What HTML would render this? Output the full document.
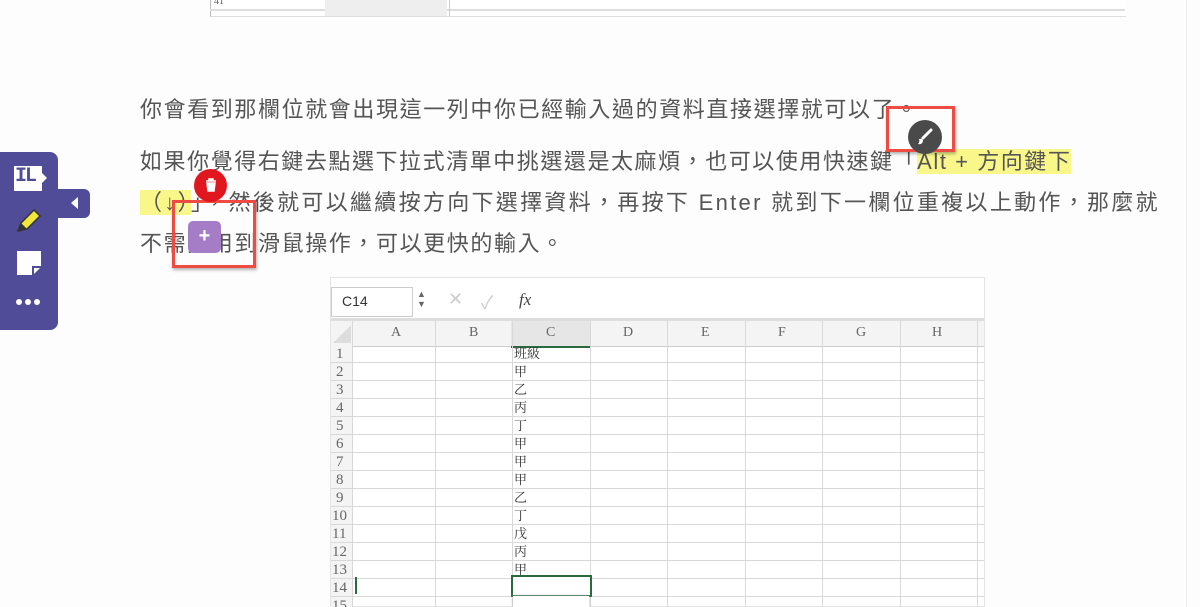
<!DOCTYPE html>
<html><head><meta charset="utf-8"><style>
html,body{margin:0;width:1200px;height:607px;overflow:hidden}
body{background:#fdfdfd;position:relative;font-family:"Liberation Sans","Noto Sans CJK TC",sans-serif}
.ab{position:absolute}
.t{position:absolute;left:140px;font-size:22px;color:#555;white-space:nowrap;letter-spacing:1.6px;line-height:30px}
.hl{background:#f9f78a}
.g{position:absolute;background:#d8d8d8}
.c{position:absolute;font-family:"Liberation Serif","Noto Serif CJK SC",serif;color:#666;font-size:14px}
</style></head><body>
<div class="ab" style="left:1186px;top:0;width:1px;height:607px;background:#eee"></div>
<div class="ab" style="left:210px;top:0;width:915px;height:16px;background:#fff;border-bottom:1px solid #ddd;border-left:1px solid #bbb"></div>
<div class="ab" style="left:210px;top:9px;width:915px;height:2px;background:#ddd"></div>
<div class="ab" style="left:325px;top:0;width:122px;height:16px;background:#eee"></div>
<div class="ab" style="left:449px;top:0;width:1px;height:16px;background:#ccc"></div>
<div class="c" style="left:214px;top:-4px;font-size:10px">41</div>

<div class="t" style="top:95px">你會看到那欄位就會出現這一列中你已經輸入過的資料直接選擇就可以了。</div>
<div class="t" style="top:147px;letter-spacing:1.55px">如果你覺得右鍵去點選下拉式清單中挑選還是太麻煩，也可以使用快速鍵「<span class="hl">Alt + 方向鍵下</span></div>
<div class="t" style="top:188px;letter-spacing:2.3px"><span class="hl">（↓）</span>」，然後就可以繼續按方向下選擇資料，再按下 Enter 就到下一欄位重複以上動作，那麼就</div>
<div class="t" style="top:229px">不需要用到滑鼠操作，可以更快的輸入。</div>

<div class="ab" style="left:330px;top:277px;width:655px;height:330px;background:#fff;border:1px solid #e4e4e4;box-sizing:border-box"></div>
<div class="ab" style="left:331px;top:287px;width:80px;height:28px;border:1px solid #ccc;background:#fff"></div>
<div class="ab" style="left:342px;top:293px;font-size:14px;color:#333">C14</div>
<div class="ab" style="left:417px;top:289px;font-size:9px;color:#666;line-height:10px">▲<br>▼</div>
<div class="ab" style="left:448px;top:289px;font-size:18px;color:#ccc">✕</div>
<div class="ab" style="left:481px;top:289px;font-size:18px;color:#ccc">✓</div>
<div class="ab" style="left:519px;top:290px;font-size:17px;color:#444;font-family:'Liberation Serif',serif;font-style:italic">fx</div>
<div class="ab" style="left:331px;top:318px;width:653px;height:3px;background:#ddd"></div>
<div class="ab" style="left:331px;top:321px;width:653px;height:25px;background:#f4f4f4;border-bottom:1px solid #ccc"></div>
<div class="ab" style="left:511px;top:321px;width:79px;height:25px;background:#e6e6e6;border-bottom:2px solid #2a6b3d"></div>
<div class="ab" style="left:333px;top:325px;width:0;height:0;border-left:18px solid transparent;border-bottom:18px solid #ddd"></div>
<div class="ab" style="left:331px;top:346px;width:22px;height:261px;background:#f4f4f4"></div>
<div class="c" style="left:391px;top:325px">A</div><div class="c" style="left:469px;top:325px">B</div><div class="c" style="left:546px;top:325px">C</div><div class="c" style="left:623px;top:325px">D</div><div class="c" style="left:701px;top:325px">E</div><div class="c" style="left:778px;top:325px">F</div><div class="c" style="left:856px;top:325px">G</div><div class="c" style="left:932px;top:325px">H</div>
<div class="g" style="left:352px;top:321px;width:1px;height:286px"></div>
<div class="g" style="left:435px;top:321px;width:1px;height:286px"></div>
<div class="g" style="left:512px;top:321px;width:1px;height:286px"></div>
<div class="g" style="left:590px;top:321px;width:1px;height:286px"></div>
<div class="g" style="left:667px;top:321px;width:1px;height:286px"></div>
<div class="g" style="left:745px;top:321px;width:1px;height:286px"></div>
<div class="g" style="left:822px;top:321px;width:1px;height:286px"></div>
<div class="g" style="left:900px;top:321px;width:1px;height:286px"></div>
<div class="g" style="left:977px;top:321px;width:1px;height:286px"></div>
<div id="rows"></div>
<script>
var v=["班級","甲","乙","丙","丁","甲","甲","甲","乙","丁","戊","丙","甲","",""],h="";
for(var i=0;i<15;i++){var y=345+i*18;h+='<div class="g" style="left:331px;top:'+(y+17)+'px;width:653px;height:1px"></div>';
h+='<div class="c" style="left:'+(i<9?336:332)+'px;top:'+y+'px;font-size:15px;line-height:18px">'+(i+1)+'</div>';
h+='<div class="c" style="left:514px;top:'+y+'px;font-size:13px;line-height:18px;color:#333">'+v[i]+'</div>';}
document.getElementById('rows').innerHTML=h;
</script>
<div class="ab" style="left:511px;top:575px;width:77px;height:18px;border:2px solid #2a6b3d;background:#fff"></div>
<div class="ab" style="left:355px;top:577px;width:2px;height:17px;background:#2a6b3d"></div>
<div class="ab" style="left:513px;top:596px;width:76px;height:11px;background:#fff;box-shadow:0 0 3px #bbb"></div>

<div class="ab" style="left:0;top:152px;width:58px;height:178px;background:#514c97;border-radius:0 8px 8px 0"></div>
<div class="ab" style="left:56px;top:189px;width:34px;height:29px;background:#514c97;border-radius:0 6px 6px 0"></div>
<div class="ab" style="left:71px;top:197px;width:0;height:0;border-top:6px solid transparent;border-bottom:6px solid transparent;border-right:7px solid #fff"></div>
<div class="ab" style="left:14px;top:166px;width:28px;height:25px;background:#fff"></div>
<div class="ab" style="left:15px;top:165px;font:bold 20px 'Liberation Mono',monospace;color:#514c97;letter-spacing:-2px">IL</div>
<div class="ab" style="left:42px;top:173px;width:0;height:0;border-top:5px solid transparent;border-bottom:5px solid transparent;border-left:5px solid #fff"></div>
<svg class="ab" style="left:14px;top:207px" width="30" height="28"><path d="M4 24 L7 16 L20 3 L26 9 L13 22 Z" fill="#f1e63a" stroke="#333" stroke-width="1.5"/><path d="M4 24 L7 16 L13 22Z" fill="#333"/></svg>
<svg class="ab" style="left:16px;top:250px" width="26" height="26"><path d="M1 1 H25 V17 L17 25 H1 Z" fill="#fff"/><path d="M17 25 V17 H25" fill="none" stroke="#514c97" stroke-width="2"/></svg>
<div class="ab" style="left:16px;top:299px;width:6px;height:6px;border-radius:3px;background:#fff;box-shadow:9px 0 #fff,18px 0 #fff"></div>

<div class="ab" style="left:886px;top:106px;width:63px;height:40px;border:3px solid #ee4b43;box-shadow:1px 2px 3px rgba(0,0,0,.3)"></div>
<div class="ab" style="left:908px;top:120px;width:34px;height:34px;border-radius:50%;background:#4a4a4a"></div>
<svg class="ab" style="left:914px;top:126px" width="22" height="22"><path d="M17 4 L9 12" stroke="#fff" stroke-width="3" stroke-linecap="round"/><path d="M5 13 Q9 12 9 15 Q8 19 4 18 Q6 16 5 13Z" fill="#fff"/></svg>
<div class="ab" style="left:172px;top:200px;width:78px;height:62px;border:3px solid #ee4b43;box-shadow:1px 2px 3px rgba(0,0,0,.3)"></div>
<div class="ab" style="left:194px;top:169px;width:33px;height:33px;border-radius:50%;background:#e0171f"></div>
<svg class="ab" style="left:203px;top:177px" width="16" height="16"><path d="M3 4 H13 M6 4 V2 H10 V4 M4 6 H12 L11 14 H5 Z" stroke="#fff" stroke-width="1.5" fill="#fff"/></svg>
<div class="ab" style="left:188px;top:221px;width:33px;height:32px;border-radius:5px;background:#a57dc7;color:#fff;font:bold 20px 'Liberation Sans';text-align:center;line-height:31px">+</div>
</body></html>
